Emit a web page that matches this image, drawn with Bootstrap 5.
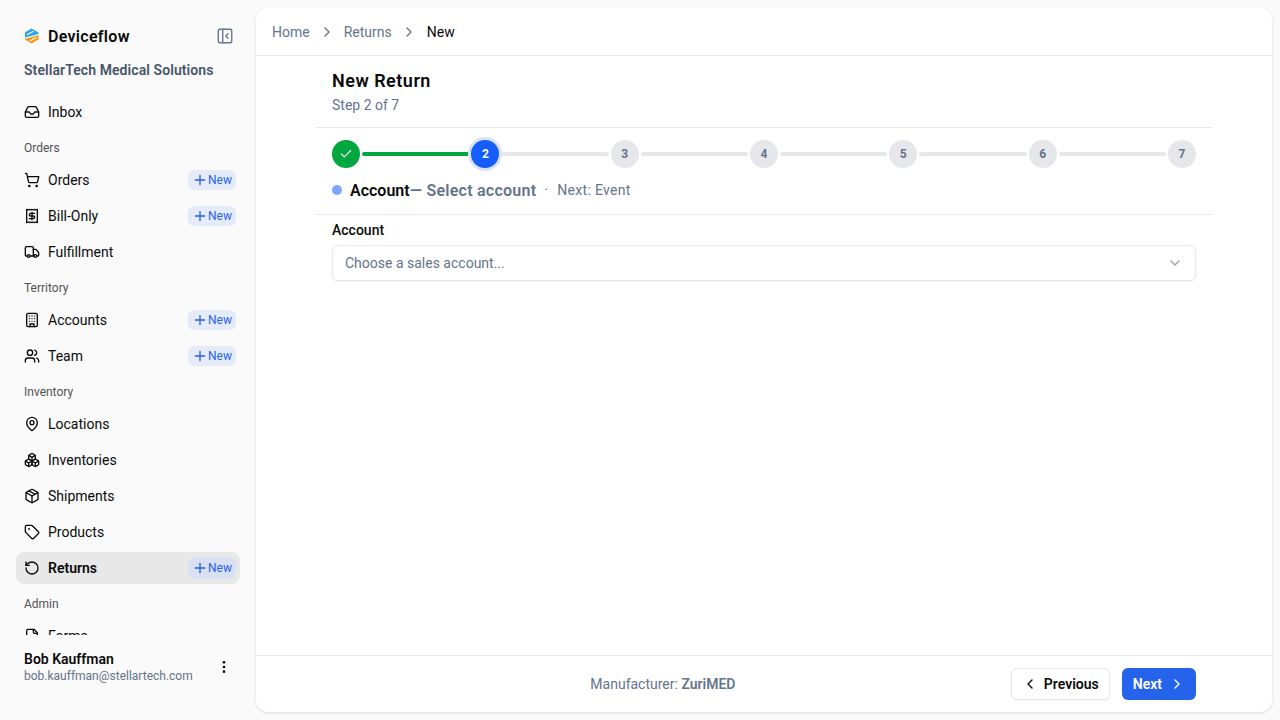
<!DOCTYPE html>
<html lang="en">
<head>
    <meta charset="UTF-8">
    <title>New Return</title>
    <link href="https://cdn.jsdelivr.net/npm/bootstrap@5.3.2/dist/css/bootstrap.min.css" rel="stylesheet">
    <style>
        body { background: #fafafa; font-family: Roboto, "Liberation Sans", sans-serif; font-size: 14px; color: #0a0a0a; height: 100vh; overflow: hidden; }
        .ico { width: 16px; height: 16px; fill: none; stroke: currentColor; stroke-width: 2; stroke-linecap: round; stroke-linejoin: round; flex-shrink: 0; }
        .side { width: 256px; height: 720px; }
        .side-head { padding: 16px 16px 0 24px; height: 56px; }
        .brand { font-size: 16px; font-weight: 600; line-height: 24px; padding-top: 1px; color: #0a0a0a; letter-spacing: .3px; }
        .collapse-btn { color: #64748b; margin-right: 6px; }
        .collapse-btn .ico { width: 18px; height: 18px; stroke-width: 1.8; }
        .org { padding: 0 24px; margin-top: 2px; height: 38px; line-height: 24px; font-weight: 600; color: #475569; letter-spacing: .08px; }
        .side-nav { height: 539px; padding: 0 16px; overflow: hidden; }
        .nav-sec { height: 32px; line-height: 32px; padding-left: 8px; font-size: 12px; font-weight: 400; color: #525252; }
        .nav-row { height: 32px; margin-bottom: 4px; padding: 0 4px 0 8px; border-radius: 8px; color: #0a0a0a; text-decoration: none; gap: 8px; }
        .nav-row.on { background: #e8e8e8; font-weight: 600; }
        .new-chip { height: 20px; padding: 0 4px; border-radius: 6px; background: #e6ebfa; color: #2563eb; font-size: 12px; font-weight: 400; }
        .nav-row.on .new-chip { background: #d9e0f3; }
        .side-foot { padding: 15px 16px 0 24px; }
        .who { font-weight: 600; line-height: 18px; }
        .mail { font-size: 12px; line-height: 16px; color: #64748b; }
        .dots { margin-right: 8px; color: #0a0a0a; }
        .main-wrap { padding: 8px 8px 8px 0; height: 720px; }
        .panel { background: #fff; border-radius: 12px; box-shadow: 0 1px 3px rgba(0,0,0,.12); }
        .top-bar { height: 48px; padding: 1px 16px 0; border-bottom: 1px solid #e2e8f0; }
        .crumb-link { color: #64748b; text-decoration: none; }
        .crumb-sep { color: #64748b; margin: 0 9px; }
        .trail-now { color: #0a0a0a; margin-left: 1px; }
        .body-wrap { padding: 0 60px; }
        .page-head { padding: 13px 16px 0; height: 72px; border-bottom: 1px solid #e2e8f0; }
        .page-head h1 { font-size: 18px; font-weight: 600; line-height: 24px; margin: 0 0 2px; color: #0a0a0a; letter-spacing: .5px; }
        .page-head p { margin: 0; line-height: 20px; color: #64748b; }
        .step-wrap { padding: 12px 16px 0; height: 87px; border-bottom: 1px solid #e2e8f0; }
        .stepper { gap: 2px; height: 28px; }
        .step-dot { width: 28px; height: 28px; border-radius: 50%; background: #e5e7eb; color: #64748b; font-size: 12px; font-weight: 700; flex-shrink: 0; }
        .step-dot.ok { background: #00a63e; color: #fff; }
        .step-dot.ok .ico { width: 14px; height: 14px; }
        .step-dot.cur { background: #155dfc; color: #fff; box-shadow: 0 0 0 3px #d8e2f8; }
        .step-line { height: 4px; flex: 1 1 0; border-radius: 2px; background: #e5e7eb; }
        .step-line.ok { background: #00a63e; }
        .step-info { margin-top: 10px; height: 24px; }
        .step-bullet { width: 10px; height: 10px; border-radius: 50%; background: #7ea6ff; margin-right: 8px; }
        .step-name { font-size: 16px; font-weight: 600; padding-top: 1px; color: #0a0a0a; }
        .step-desc { font-size: 16px; font-weight: 600; padding-top: 1px; color: #64748b; letter-spacing: .25px; }
        .step-next { color: #64748b; margin-left: 8px; letter-spacing: .3px; }
        .step-next i { font-style: normal; margin-right: 9px; }
        .form-wrap { padding: 5px 16px 0; }
        .form-wrap label { font-weight: 500; line-height: 20px; margin-bottom: 5px; display: block; color: #0a0a0a; }
        .acct-select { height: 36px; padding: 0 12px; font-size: 14px; color: #64748b; border: 1px solid #e2e8f0; border-radius: 6px; box-shadow: 0 1px 2px rgba(0,0,0,.05); background-image: url("data:image/svg+xml,%3csvg xmlns='http://www.w3.org/2000/svg' viewBox='0 0 24 24' fill='none' stroke='%2394a3b8' stroke-width='2' stroke-linecap='round' stroke-linejoin='round'%3e%3cpath d='m6 9 6 6 6-6'/%3e%3c/svg%3e"); background-size: 16px 16px; background-position: right 12px center; }
        .panel-foot { height: 57px; padding: 0 76px; border-top: 1px solid #e2e8f0; }
        .maker { color: #64748b; margin-right: 17px; }
        .maker b { font-weight: 600; }
        .btn-prev, .btn-next { height: 32px; font-size: 14px; font-weight: 600; border-radius: 6px; gap: 6px; display: inline-flex; align-items: center; }
        .btn-prev { padding: 0 10px; border: 1px solid #e2e8f0; color: #0a0a0a; background: #fff; box-shadow: 0 1px 2px rgba(0,0,0,.05); }
        .btn-next { padding: 0 11px; gap: 7px; border: 0; color: #fff; background: #2563eb; margin-left: 12px; }
    </style>
</head>
<body class="d-flex">
    <svg width="0" height="0" class="position-absolute">
        <symbol id="i-inbox" viewBox="0 0 24 24"><polyline points="22 12 16 12 14 15 10 15 8 12 2 12"/><path d="M5.45 5.11 2 12v6a2 2 0 0 0 2 2h16a2 2 0 0 0 2-2v-6l-3.45-6.89A2 2 0 0 0 16.76 4H7.24a2 2 0 0 0-1.79 1.11z"/></symbol>
        <symbol id="i-cart" viewBox="0 0 24 24"><circle cx="8" cy="21" r="1"/><circle cx="19" cy="21" r="1"/><path d="M2.05 2.05h2l2.66 12.42a2 2 0 0 0 2 1.58h9.78a2 2 0 0 0 1.95-1.57l1.65-7.43H5.12"/></symbol>
        <symbol id="i-receipt" viewBox="0 0 24 24"><path d="M4 2v20l2-1 2 1 2-1 2 1 2-1 2 1 2-1 2 1V2l-2 1-2-1-2 1-2-1-2 1-2-1-2 1Z"/><path d="M16 8h-6a2 2 0 1 0 0 4h4a2 2 0 1 1 0 4H8"/><path d="M12 17.5v-11"/></symbol>
        <symbol id="i-truck" viewBox="0 0 24 24"><path d="M14 18V6a2 2 0 0 0-2-2H4a2 2 0 0 0-2 2v11a1 1 0 0 0 1 1h2"/><path d="M15 18H9"/><path d="M19 18h2a1 1 0 0 0 1-1v-3.65a1 1 0 0 0-.22-.624l-3.48-4.35A1 1 0 0 0 17.52 8H14"/><circle cx="17" cy="18" r="2"/><circle cx="7" cy="18" r="2"/></symbol>
        <symbol id="i-building" viewBox="0 0 24 24"><rect x="4" y="2" width="16" height="20" rx="2"/><path d="M9 22v-4h6v4"/><path d="M8 6h.01M16 6h.01M12 6h.01M12 10h.01M12 14h.01M16 10h.01M16 14h.01M8 10h.01M8 14h.01"/></symbol>
        <symbol id="i-users" viewBox="0 0 24 24"><path d="M16 21v-2a4 4 0 0 0-4-4H6a4 4 0 0 0-4 4v2"/><circle cx="9" cy="7" r="4"/><path d="M22 21v-2a4 4 0 0 0-3-3.87"/><path d="M16 3.13a4 4 0 0 1 0 7.75"/></symbol>
        <symbol id="i-pin" viewBox="0 0 24 24"><path d="M20 10c0 6-8 12-8 12s-8-6-8-12a8 8 0 0 1 16 0Z"/><circle cx="12" cy="10" r="3"/></symbol>
        <symbol id="i-boxes" viewBox="0 0 24 24"><path d="M2.97 12.92A2 2 0 0 0 2 14.63v3.24a2 2 0 0 0 .97 1.71l3 1.8a2 2 0 0 0 2.06 0L12 19v-5.5l-5-3-4.03 2.42Z"/><path d="m7 16.5-4.74-2.85M7 16.5l5-3M7 16.5v5.17"/><path d="M12 13.5V19l3.97 2.38a2 2 0 0 0 2.06 0l3-1.8a2 2 0 0 0 .97-1.71v-3.24a2 2 0 0 0-.97-1.71L17 10.5l-5 3Z"/><path d="m17 16.5-5-3M17 16.5l4.74-2.85M17 16.5v5.17"/><path d="M7.97 4.42A2 2 0 0 0 7 6.13v4.37l5 3 5-3V6.13a2 2 0 0 0-.97-1.71l-3-1.8a2 2 0 0 0-2.06 0l-3 1.8Z"/><path d="M12 8 7.26 5.15M12 8l4.74-2.85M12 13.5V8"/></symbol>
        <symbol id="i-package" viewBox="0 0 24 24"><path d="m7.5 4.27 9 5.15"/><path d="M21 8a2 2 0 0 0-1-1.73l-7-4a2 2 0 0 0-2 0l-7 4A2 2 0 0 0 3 8v8a2 2 0 0 0 1 1.73l7 4a2 2 0 0 0 2 0l7-4A2 2 0 0 0 21 16Z"/><path d="m3.3 7 8.7 5 8.7-5"/><path d="M12 22V12"/></symbol>
        <symbol id="i-tag" viewBox="0 0 24 24"><path d="M12.586 2.586A2 2 0 0 0 11.172 2H4a2 2 0 0 0-2 2v7.172a2 2 0 0 0 .586 1.414l8.704 8.704a2.426 2.426 0 0 0 3.42 0l6.58-6.58a2.426 2.426 0 0 0 0-3.42z"/><circle cx="7.5" cy="7.5" r=".5"/></symbol>
        <symbol id="i-undo" viewBox="0 0 24 24"><path d="M3 12a9 9 0 1 0 9-9 9.75 9.75 0 0 0-6.74 2.74L3 8"/><path d="M3 3v5h5"/></symbol>
        <symbol id="i-file" viewBox="0 0 24 24"><path d="M15 2H6a2 2 0 0 0-2 2v16a2 2 0 0 0 2 2h12a2 2 0 0 0 2-2V7Z"/><path d="M14 2v4a2 2 0 0 0 2 2h4"/></symbol>
        <symbol id="i-plus" viewBox="0 0 24 24"><path d="M5 12h14M12 5v14"/></symbol>
        <symbol id="i-right" viewBox="0 0 24 24"><path d="m9 18 6-6-6-6"/></symbol>
        <symbol id="i-left" viewBox="0 0 24 24"><path d="m15 18-6-6 6-6"/></symbol>
        <symbol id="i-check" viewBox="0 0 24 24"><path d="M20 6 9 17l-5-5"/></symbol>
    </svg>

    <aside class="side d-flex flex-column flex-shrink-0">
        <div class="side-head d-flex align-items-center justify-content-between">
            <div class="d-flex align-items-center gap-2">
                <svg width="16" height="16" viewBox="0 0 16 16">
                    <path d="M7.5 .5 14.5 4.4V6L1 9.6V4.4Z" fill="#29a3ea"/>
                    <path d="M14.5 7V11.6L7.5 15.5 1 11.6V10.8Z" fill="#f59a23"/>
                    <path d="M3 6.8 9.5 3.2M6 12.8 12.5 9.2" stroke="#fff" stroke-width="1.1"/>
                </svg>
                <span class="brand">Deviceflow</span>
            </div>
            <span class="collapse-btn d-flex">
                <svg class="ico" viewBox="0 0 24 24"><rect x="3" y="3" width="18" height="18" rx="2"/><path d="M9 3v18"/><path d="m16 15-3-3 3-3"/></svg>
            </span>
        </div>
        <div class="org">StellarTech Medical Solutions</div>
        <nav class="side-nav flex-shrink-0">
            <a href="#" class="nav-row d-flex align-items-center"><svg class="ico"><use href="#i-inbox"/></svg>Inbox</a>
            <div class="nav-sec">Orders</div>
            <a href="#" class="nav-row d-flex align-items-center"><svg class="ico"><use href="#i-cart"/></svg><span class="flex-grow-1">Orders</span><span class="new-chip d-flex align-items-center"><svg class="ico"><use href="#i-plus"/></svg>New</span></a>
            <a href="#" class="nav-row d-flex align-items-center"><svg class="ico"><use href="#i-receipt"/></svg><span class="flex-grow-1">Bill-Only</span><span class="new-chip d-flex align-items-center"><svg class="ico"><use href="#i-plus"/></svg>New</span></a>
            <a href="#" class="nav-row d-flex align-items-center"><svg class="ico"><use href="#i-truck"/></svg>Fulfillment</a>
            <div class="nav-sec">Territory</div>
            <a href="#" class="nav-row d-flex align-items-center"><svg class="ico"><use href="#i-building"/></svg><span class="flex-grow-1">Accounts</span><span class="new-chip d-flex align-items-center"><svg class="ico"><use href="#i-plus"/></svg>New</span></a>
            <a href="#" class="nav-row d-flex align-items-center"><svg class="ico"><use href="#i-users"/></svg><span class="flex-grow-1">Team</span><span class="new-chip d-flex align-items-center"><svg class="ico"><use href="#i-plus"/></svg>New</span></a>
            <div class="nav-sec">Inventory</div>
            <a href="#" class="nav-row d-flex align-items-center"><svg class="ico"><use href="#i-pin"/></svg>Locations</a>
            <a href="#" class="nav-row d-flex align-items-center"><svg class="ico"><use href="#i-boxes"/></svg>Inventories</a>
            <a href="#" class="nav-row d-flex align-items-center"><svg class="ico"><use href="#i-package"/></svg>Shipments</a>
            <a href="#" class="nav-row d-flex align-items-center"><svg class="ico"><use href="#i-tag"/></svg>Products</a>
            <a href="#" class="nav-row on d-flex align-items-center"><svg class="ico"><use href="#i-undo"/></svg><span class="flex-grow-1">Returns</span><span class="new-chip d-flex align-items-center"><svg class="ico"><use href="#i-plus"/></svg>New</span></a>
            <div class="nav-sec">Admin</div>
            <a href="#" class="nav-row d-flex align-items-center"><svg class="ico"><use href="#i-file"/></svg>Forms</a>
        </nav>
        <div class="side-foot d-flex align-items-center justify-content-between">
            <div>
                <div class="who">Bob Kauffman</div>
                <div class="mail">bob.kauffman@stellartech.com</div>
            </div>
            <svg class="dots" width="16" height="16" viewBox="0 0 24 24" fill="currentColor"><circle cx="12" cy="5" r="2"/><circle cx="12" cy="12" r="2"/><circle cx="12" cy="19" r="2"/></svg>
        </div>
    </aside>

    <div class="main-wrap flex-grow-1">
        <main class="panel h-100 d-flex flex-column">
            <header class="top-bar d-flex align-items-center flex-shrink-0">
                <a href="#" class="crumb-link">Home</a>
                <svg class="ico crumb-sep"><use href="#i-right"/></svg>
                <a href="#" class="crumb-link">Returns</a>
                <svg class="ico crumb-sep"><use href="#i-right"/></svg>
                <span class="trail-now">New</span>
            </header>
            <div class="body-wrap flex-grow-1">
                <div class="page-head">
                    <h1>New Return</h1>
                    <p>Step 2 of 7</p>
                </div>
                <div class="step-wrap">
                    <div class="stepper d-flex align-items-center">
                        <span class="step-dot ok d-flex align-items-center justify-content-center"><svg class="ico"><use href="#i-check"/></svg></span>
                        <span class="step-line ok"></span>
                        <span class="step-dot cur d-flex align-items-center justify-content-center">2</span>
                        <span class="step-line"></span>
                        <span class="step-dot d-flex align-items-center justify-content-center">3</span>
                        <span class="step-line"></span>
                        <span class="step-dot d-flex align-items-center justify-content-center">4</span>
                        <span class="step-line"></span>
                        <span class="step-dot d-flex align-items-center justify-content-center">5</span>
                        <span class="step-line"></span>
                        <span class="step-dot d-flex align-items-center justify-content-center">6</span>
                        <span class="step-line"></span>
                        <span class="step-dot d-flex align-items-center justify-content-center">7</span>
                    </div>
                    <div class="step-info d-flex align-items-center">
                        <span class="step-bullet"></span>
                        <span class="step-name">Account</span><span class="step-desc">— Select account</span>
                        <span class="step-next"><i>·</i>Next: Event</span>
                    </div>
                </div>
                <div class="form-wrap">
                    <label for="acct">Account</label>
                    <select id="acct" class="form-select acct-select">
                        <option>Choose a sales account...</option>
                    </select>
                </div>
            </div>
            <footer class="panel-foot d-flex align-items-center flex-shrink-0">
                <div class="maker flex-grow-1 text-center">Manufacturer: <b>ZuriMED</b></div>
                <button class="btn btn-prev" type="button"><svg class="ico"><use href="#i-left"/></svg>Previous</button>
                <button class="btn btn-next" type="button">Next<svg class="ico"><use href="#i-right"/></svg></button>
            </footer>
        </main>
    </div>
</body>
</html>
